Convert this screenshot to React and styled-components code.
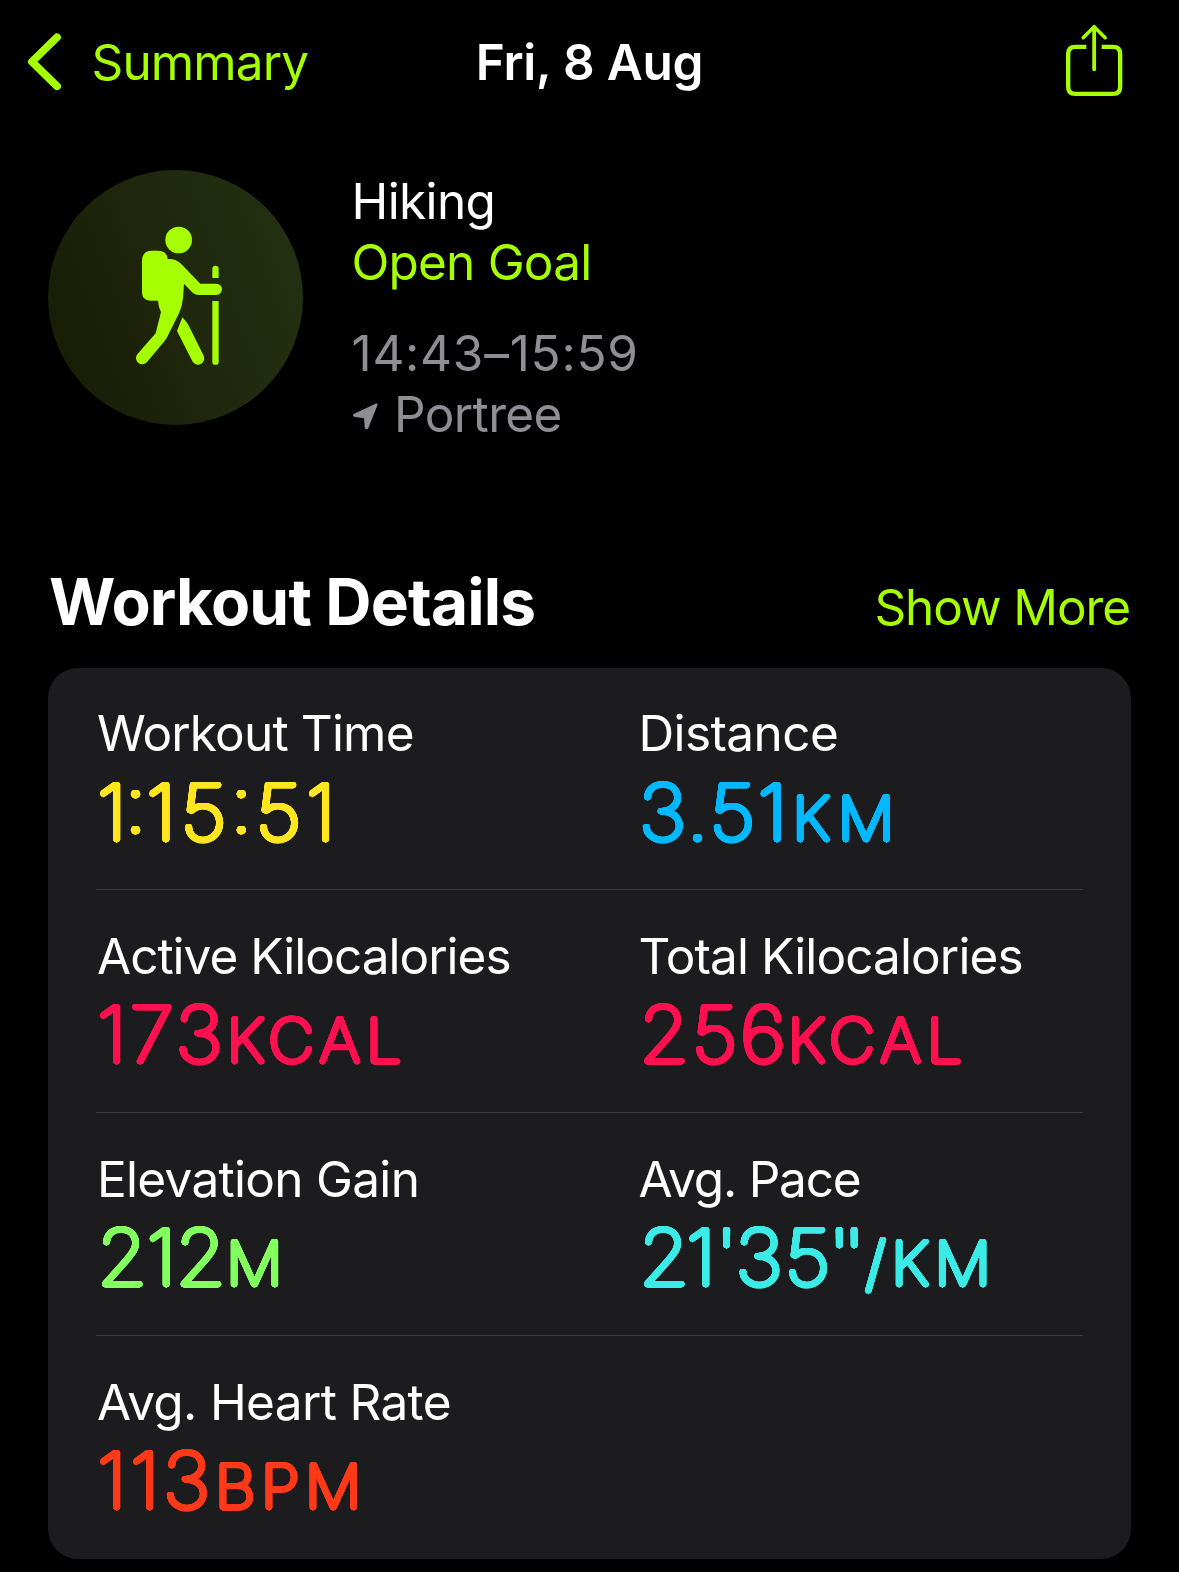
import React from "react";
import styled, { createGlobalStyle } from "styled-components";

const LIME = "#a6ff00";

// Thin strokes thickened in every direction give numerals with round ends.
const RADIUS = 2.5;
const STEPS = 32;
const roundStroke = Array.from({ length: STEPS }, (_, i) => {
  const a = (i * 2 * Math.PI) / STEPS;
  return `${(RADIUS * Math.cos(a)).toFixed(2)}px ${(RADIUS * Math.sin(a)).toFixed(2)}px 0 currentColor`;
}).join(", ");

const GlobalStyle = createGlobalStyle`
  body {
    margin: 0;
    background: #000;
  }
`;

const Screen = styled.div`
  box-sizing: border-box;
  width: 1179px;
  height: 1572px;
  overflow: hidden;
  background: #000;
  color: #fff;
  font-family: Inter, "Liberation Sans", sans-serif;
  font-size: 49.5px;
  line-height: 61px;
  white-space: nowrap;
`;

const NavBar = styled.header`
  box-sizing: border-box;
  height: 124px;
  padding: 0 24px;
  display: grid;
  grid-template-columns: 1fr auto 1fr;
  align-items: center;
`;

const IconButton = styled.button`
  display: flex;
  align-items: center;
  padding: 0;
  border: 0;
  background: none;
  color: ${LIME};
  font: inherit;
`;

const BackButton = styled(IconButton)`
  gap: 23.5px;
  letter-spacing: -0.85px;
`;

const ShareButton = styled(IconButton)`
  justify-self: end;
  margin: 0 15px 4px 0;
`;

const NavTitle = styled.h1`
  margin: 0;
  font: inherit;
  font-weight: 600;
  letter-spacing: -0.21px;
`;

const Workout = styled.section`
  height: 275px;
  padding: 46px 48px 0;
  display: flex;
  gap: 48.5px;
`;

const Badge = styled.div`
  width: 255px;
  height: 255px;
  border-radius: 50%;
  background: linear-gradient(70deg, #181c05 8%, #1f270d 50%, #243112 95%);
  overflow: hidden;
`;

const Info = styled.div`
  display: flex;
  flex-direction: column;
  padding-top: 0.7px;
`;

const InfoLine = styled.div`
  display: flex;
  align-items: center;
  gap: 15.5px;
  height: 61px;
  margin-top: ${(p) => p.$space || 0}px;
  color: ${(p) => p.$color || "#fff"};
  letter-spacing: ${(p) => p.$track}px;

  svg {
    margin-top: 4px;
  }
`;

const SectionHeader = styled.div`
  display: flex;
  justify-content: space-between;
  align-items: baseline;
  height: 78px;
  margin: 118px 49px 27px 49px;
`;

const SectionTitle = styled.h2`
  margin: 0;
  font-size: 64px;
  font-weight: 700;
  line-height: 78px;
  letter-spacing: -0.82px;
`;

const ShowMore = styled.a`
  color: ${LIME};
  letter-spacing: -1.08px;
`;

const Card = styled.section`
  margin: 0 48px;
  padding: 0 48px;
  border-radius: 30px;
  background: #1c1c1e;
`;

const Row = styled.div`
  box-sizing: border-box;
  height: 223px;
  padding: 36px 0 0 1px;
  display: grid;
  grid-template-columns: 541.5px 1fr;
  border-bottom: 1px solid #3b3b3e;

  &:first-child {
    height: 222px;
    padding-top: 35px;
  }

  &:last-child {
    border-bottom: 0;
  }
`;

const Label = styled.div`
  line-height: 60px;
  letter-spacing: ${(p) => p.$track}px;
`;

const Value = styled.div`
  margin-top: 1px;
  height: 94px;
  color: ${(p) => p.$color};
  font-size: 77px;
  font-weight: 100;
  line-height: 94px;
  text-shadow: ${roundStroke};
  transform: scaleX(1.05);
  transform-origin: 0 0;

  ${Row}:first-child & {
    margin-top: 2px;
  }
`;

const Digits = styled.span`
  letter-spacing: ${(p) => p.$track}px;
  font-feature-settings: "case";
`;

const Unit = styled.span`
  margin-left: ${(p) => p.$shift || 0}px;
  font-size: 60px;
  line-height: 1;
  letter-spacing: ${(p) => p.$track}px;
`;

const rows = [
  [
    {
      label: "Workout Time",
      track: -0.83,
      color: "#ffe620",
      digits: [["1", -2], [":", -0.2], ["1", 4.7], ["5", 3.7], [":", 3.4], ["5", 4.4], ["1", 0]],
    },
    { label: "Distance", track: -0.6, color: "#00b9ff", digits: [["3.51", 2.2]], unit: "KM", unitTrack: 7.5, shift: 2.8 },
  ],
  [
    { label: "Active Kilocalories", track: -1, color: "#ff1150", digits: [["173", 2.9]], unit: "KCAL", unitTrack: 5.9, shift: 1 },
    { label: "Total Kilocalories", track: -0.89, color: "#ff1150", digits: [["256", 2.6]], unit: "KCAL", unitTrack: 5.9, shift: -1 },
  ],
  [
    { label: "Elevation Gain", track: -0.7, color: "#83ff5f", digits: [["212", -0.6]], unit: "M", unitTrack: 0, shift: 1 },
    {
      label: "Avg. Pace",
      track: -1.2,
      color: "#3cebe6",
      digits: [["2", -3], ["1", -0.3], ["'", -2], ["3", 2], ["5", -2], ["''", -7]],
      unit: "/KM",
      unitTrack: 5.3,
      shift: 7,
    },
  ],
  [{ label: "Avg. Heart Rate", track: -0.65, color: "#ff3a1a", digits: [["113", 3.2]], unit: "BPM", unitTrack: 5.5, shift: 1.5 }],
];

function ChevronIcon() {
  return (
    <svg width="44" height="66" viewBox="24 29 44 66" fill="none" stroke="currentColor" strokeWidth="7.8" strokeLinecap="round" strokeLinejoin="round">
      <path d="M57 37.3L32 61.8L57 86.2" />
    </svg>
  );
}

function ShareIcon() {
  return (
    <svg width="90" height="90" viewBox="0 0 270 270" fill="none" stroke="currentColor">
      <path d="M109 95.5H76Q54.5 95.5 54.5 117V215Q54.5 236.5 76 236.5H189Q210.5 236.5 210.5 215V117Q210.5 95.5 189 95.5H155" strokeWidth="13" />
      <path d="M132.5 37V163" strokeWidth="11.5" strokeLinecap="round" />
      <path d="M99.5 68L132.5 35L165.5 68" strokeWidth="10.5" strokeLinecap="round" strokeLinejoin="round" />
    </svg>
  );
}

function HikerIcon() {
  return (
    <svg width="255" height="255" viewBox="54 60 765 765" fill={LIME}>
      <circle cx="446" cy="270" r="40" />
      <path d="M336 333Q336 302 366 302H383Q411 302 413 327Q437 325 453 341L511 401H559A17 17 0 0 1 559 435H507Q497 435 488 428L462 401L459 445Q457 468 447 490L412 560Q408 568 402 575L351 636A18.5 18.5 0 0 1 322 613L377 550L393 486Q385 470 384 452H361Q336 452 336 427Z" />
      <path d="M457 502Q470 515 477 529L520 615A18.5 18.5 0 0 1 488 635L441 543Z" />
      <path d="M547 384V357A9.5 9.5 0 0 1 566 357V384Z" />
      <path d="M547 453H566V635A9.5 9.5 0 0 1 547 635Z" />
    </svg>
  );
}

function LocationIcon() {
  return (
    <svg width="27" height="29" viewBox="36 36 81 87" fill="currentColor" stroke="currentColor" strokeWidth="6.5" strokeLinejoin="round">
      <path d="M109.500 43.500L42.500 75Q42 77.500 45 78L75 81.500L77.500 112Q78 115.500 81.500 114Z" />
    </svg>
  );
}

function Metric({ label, track, color, digits, unit, unitTrack, shift }) {
  return (
    <div>
      <Label $track={track}>{label}</Label>
      <Value $color={color}>
        {digits.map(([text, spacing], i) => (
          <Digits key={i} $track={spacing}>
            {text}
          </Digits>
        ))}
        {unit && (
          <Unit $track={unitTrack} $shift={shift}>
            {unit}
          </Unit>
        )}
      </Value>
    </div>
  );
}

export default function App() {
  return (
    <Screen>
      <GlobalStyle />
      <NavBar>
        <BackButton>
          <ChevronIcon />
          Summary
        </BackButton>
        <NavTitle>Fri, 8 Aug</NavTitle>
        <ShareButton aria-label="Share">
          <ShareIcon />
        </ShareButton>
      </NavBar>
      <Workout>
        <Badge>
          <HikerIcon />
        </Badge>
        <Info>
          <InfoLine $track={-0.62}>Hiking</InfoLine>
          <InfoLine $track={-0.8} $color={LIME}>
            Open Goal
          </InfoLine>
          <InfoLine $track={0.75} $color="#8e8e93" $space={30}>
            14:43–15:59
          </InfoLine>
          <InfoLine $track={-0.62} $color="#8e8e93">
            <LocationIcon />
            Portree
          </InfoLine>
        </Info>
      </Workout>
      <SectionHeader>
        <SectionTitle>Workout Details</SectionTitle>
        <ShowMore>Show More</ShowMore>
      </SectionHeader>
      <Card>
        {rows.map((metrics) => (
          <Row key={metrics[0].label}>
            {metrics.map((metric) => (
              <Metric key={metric.label} {...metric} />
            ))}
          </Row>
        ))}
      </Card>
    </Screen>
  );
}
